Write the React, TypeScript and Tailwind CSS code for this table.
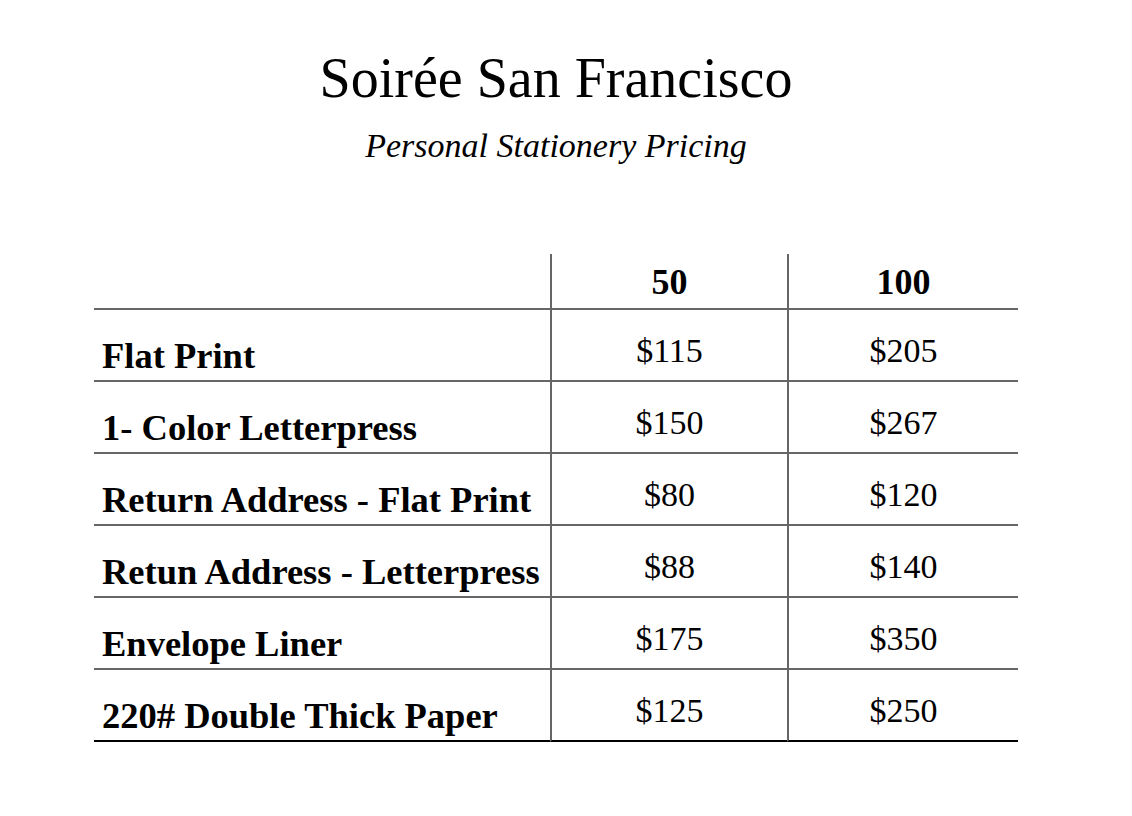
import React from "react";

const rows: [string, string, string][] = [
  ["Flat Print", "$115", "$205"],
  ["1- Color Letterpress", "$150", "$267"],
  ["Return Address - Flat Print", "$80", "$120"],
  ["Retun Address - Letterpress", "$88", "$140"],
  ["Envelope Liner", "$175", "$350"],
  ["220# Double Thick Paper", "$125", "$250"],
];

export default function App() {
  return (
    <div
      className="w-[1132px] h-[816px] bg-white text-black"
      style={{ fontFamily: '"Liberation Serif", "Times New Roman", serif' }}
    >
      <div className="pt-[46px] pr-[20px] flex flex-col items-center">
        <h1 className="text-[56px] leading-[64px] font-normal">Soirée San Francisco</h1>
        <p className="text-[34px] leading-[40px] italic mt-[16px]">Personal Stationery Pricing</p>
      </div>
      <div className="ml-[94px] mt-[88px] w-[924px] grid grid-cols-[456px_237px_231px]">
        <div className="h-[56px] border-b-2 border-[#666]" />
        <div className="h-[56px] border-b-2 border-l-2 border-[#666] flex items-end justify-center pb-[8px] text-[36px] font-bold leading-none">
          50
        </div>
        <div className="h-[56px] border-b-2 border-l-2 border-[#666] flex items-end justify-center pb-[8px] text-[36px] font-bold leading-none">
          100
        </div>
        {rows.map((r, i) => {
          const last = i === rows.length - 1;
          const b = last ? "border-b-2 border-b-black" : "border-b-2 border-b-[#666]";
          return (
            <React.Fragment key={i}>
              <div className={`h-[72px] ${b} flex items-end pl-[8px] pb-[6px] text-[36.5px] font-bold leading-none whitespace-nowrap`}>
                {r[0]}
              </div>
              <div className={`h-[72px] ${b} border-l-2 border-l-[#666] flex items-end justify-center pb-[12px] text-[34px] leading-none`}>
                {r[1]}
              </div>
              <div className={`h-[72px] ${b} border-l-2 border-l-[#666] flex items-end justify-center pb-[12px] text-[34px] leading-none`}>
                {r[2]}
              </div>
            </React.Fragment>
          );
        })}
      </div>
    </div>
  );
}
